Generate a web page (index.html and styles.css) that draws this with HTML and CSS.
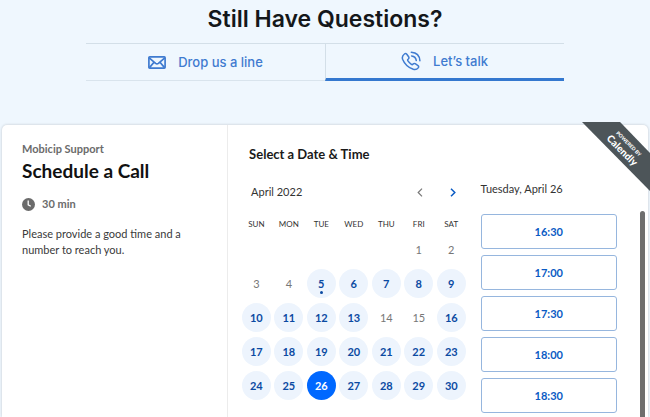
FILE: index.html
```html
<!DOCTYPE html>
<html lang="en">
<head>
    <meta charset="utf-8">
    <meta name="viewport" content="width=device-width, initial-scale=1">
    <title>Schedule a Call</title>
    <link rel="stylesheet" href="styles.css">
</head>
<body>
    <h1>Still Have Questions?</h1>

    <nav class="tabs">
        <a class="tab" href="#line">
            <svg width="18" height="13" viewBox="0 0 18 13" fill="none" stroke="currentColor" stroke-width="1.7" stroke-linejoin="round">
                <rect x="0.9" y="0.9" width="16.2" height="11.2" rx="0.8"/>
                <path d="M1.2 1.8 L7.6 7.4 Q9 8.5 10.4 7.4 L16.8 1.8 M1.5 11.6 L6 6.2 M16.5 11.6 L12 6.2"/>
            </svg>
            Drop us a line
        </a>
        <a class="tab active" href="#talk">
            <svg width="20" height="20" viewBox="0 0 20 20" fill="none" stroke="currentColor" stroke-width="1.5" stroke-linecap="round" stroke-linejoin="round">
                <path d="M3.4 3 Q4.7 1.9 5.8 3.2 L7.6 5.8 Q8.4 7 7.3 8 Q6.2 8.9 6.9 9.9 Q8.4 12 10.4 13.4 Q11.3 14 12.1 13 Q13 12 14.2 12.7 L17 14.6 Q18.2 15.5 17.2 16.9 Q15.4 19.2 12.3 18.3 Q4.6 15.6 1.6 8.2 Q0.6 5 3.4 3 Z"/>
                <path d="M10.6 4.9 Q14.8 5.4 15.3 9.6 M10.3 1.3 Q18.4 1.8 18.9 9.8"/>
            </svg>
            Let’s talk
        </a>
    </nav>

    <main class="card">
        <section class="details">
            <p class="host">Mobicip Support</p>
            <h2>Schedule a Call</h2>
            <p class="duration">
                <svg width="13" height="13" viewBox="0 0 13 13">
                    <circle cx="6.5" cy="6.5" r="6.5" fill="#6b6b6b"/>
                    <path d="M6.2 2.6 V6.8 L8.8 8.2" fill="none" stroke="#fff" stroke-width="1.3"/>
                </svg>
                30 min
            </p>
            <p class="note">Please provide a good time and a number to reach you.</p>
        </section>

        <section class="booking">
            <h3>Select a Date &amp; Time</h3>
            <div class="columns">
                <div class="calendar">
                    <div class="month">
                        <span>April 2022</span>
                        <button type="button" class="arrow" aria-label="Previous month">
                            <svg width="6" height="9" viewBox="0 0 6 9" fill="none" stroke="currentColor" stroke-width="1.2"><path d="M5 0.7 L1.2 4.5 L5 8.3"/></svg>
                        </button>
                        <button type="button" class="arrow next" aria-label="Next month">
                            <svg width="6" height="9" viewBox="0 0 6 9" fill="none" stroke="currentColor" stroke-width="1.5"><path d="M1 0.7 L4.8 4.5 L1 8.3"/></svg>
                        </button>
                    </div>
                    <table>
                        <thead>
                            <tr><th>SUN</th><th>MON</th><th>TUE</th><th>WED</th><th>THU</th><th>FRI</th><th>SAT</th></tr>
                        </thead>
                        <tbody>
                            <tr>
                                <td></td><td></td><td></td><td></td><td></td>
                                <td>1</td>
                                <td>2</td>
                            </tr>
                            <tr>
                                <td>3</td>
                                <td>4</td>
                                <td><button type="button" class="day today">5</button></td>
                                <td><button type="button" class="day">6</button></td>
                                <td><button type="button" class="day">7</button></td>
                                <td><button type="button" class="day">8</button></td>
                                <td><button type="button" class="day">9</button></td>
                            </tr>
                            <tr>
                                <td><button type="button" class="day">10</button></td>
                                <td><button type="button" class="day">11</button></td>
                                <td><button type="button" class="day">12</button></td>
                                <td><button type="button" class="day">13</button></td>
                                <td>14</td>
                                <td>15</td>
                                <td><button type="button" class="day">16</button></td>
                            </tr>
                            <tr>
                                <td><button type="button" class="day">17</button></td>
                                <td><button type="button" class="day">18</button></td>
                                <td><button type="button" class="day">19</button></td>
                                <td><button type="button" class="day">20</button></td>
                                <td><button type="button" class="day">21</button></td>
                                <td><button type="button" class="day">22</button></td>
                                <td><button type="button" class="day">23</button></td>
                            </tr>
                            <tr>
                                <td><button type="button" class="day">24</button></td>
                                <td><button type="button" class="day">25</button></td>
                                <td><button type="button" class="day selected">26</button></td>
                                <td><button type="button" class="day">27</button></td>
                                <td><button type="button" class="day">28</button></td>
                                <td><button type="button" class="day">29</button></td>
                                <td><button type="button" class="day">30</button></td>
                            </tr>
                        </tbody>
                    </table>
                </div>

                <div class="times">
                    <p class="date">Tuesday, April 26</p>
                    <button type="button" class="slot">16:30</button>
                    <button type="button" class="slot">17:00</button>
                    <button type="button" class="slot">17:30</button>
                    <button type="button" class="slot">18:00</button>
                    <button type="button" class="slot">18:30</button>
                </div>
                <div class="scrollbar"></div>
            </div>
        </section>

        <a class="ribbon" href="#calendly">
            <span><small>POWERED BY</small>Calendly</span>
        </a>
    </main>
</body>
</html>
```

FILE: styles.css
```css
* {
    box-sizing: border-box;
}

body {
    margin: 0;
    min-height: 100vh;
    display: flex;
    flex-direction: column;
    background: #eff7fe;
    color: #333;
    font-family: "Lato", "Liberation Sans", sans-serif;
    font-size: 11px;
}

h1, h2, h3, p {
    margin: 0;
}

button {
    font-family: inherit;
    padding: 0;
    border: none;
    background: none;
    cursor: pointer;
}

h1 {
    padding-top: 4px;
    font-family: "Inter", sans-serif;
    font-size: 23px;
    font-weight: 600;
    line-height: 30px;
    text-align: center;
    color: #14171a;
}

/* tabs */
.tabs {
    display: flex;
    width: 73.4%;
    margin: 9px auto 44px;
    border-top: 1px solid #d3dfe8;
}

.tab {
    flex: 1;
    display: flex;
    align-items: center;
    justify-content: center;
    gap: 12px;
    height: 37px;
    border-bottom: 1px solid #d9e4ed;
    color: #3f7bd0;
    font-family: "Inter", sans-serif;
    font-size: 13px;
    font-weight: 500;
    text-decoration: none;
}

.tab + .tab {
    border-left: 1px solid #d3dfe8;
}

.tab.active {
    border-bottom: 3px solid #3478cf;
}

/* card */
.card {
    position: relative;
    flex: 1;
    display: flex;
    margin: 0 2px;
    background: #fff;
    border-radius: 5px 5px 0 0;
    box-shadow: 0 0 3px rgba(0, 0, 0, 0.2);
}

.details {
    width: 35%;
    padding: 17px 20px;
    border-right: 1px solid #ececec;
}

.host {
    color: #6b6b6b;
    font-weight: bold;
    line-height: 14px;
}

h2 {
    margin-top: 2px;
    font-size: 19px;
    line-height: 26px;
    color: #111;
}

.duration {
    display: flex;
    align-items: center;
    gap: 7px;
    margin: 12px 0 14px;
    color: #6b6b6b;
    font-weight: bold;
    line-height: 16px;
}

.note {
    color: #3a3a3a;
    line-height: 16px;
}

.booking {
    flex: 1;
    display: flex;
    flex-direction: column;
    padding: 21px 3px 0 12px;
}

h3 {
    padding-left: 9px;
    font-size: 13px;
    line-height: 16px;
    color: #1a1a1a;
}

.columns {
    flex: 1;
    display: flex;
    margin-top: 19px;
}

.calendar {
    flex: 5;
    padding-top: 1px;
}

.month {
    display: flex;
    align-items: center;
    padding: 0 3px 0 11px;
    line-height: 20px;
}

.month span {
    flex: 1;
}

.arrow {
    display: flex;
    align-items: center;
    justify-content: center;
    width: 23px;
    height: 20px;
    margin-left: 10px;
    color: #777;
}

.arrow.next {
    color: #0a5bc4;
}

table {
    width: 100%;
    table-layout: fixed;
    border-collapse: collapse;
}

th {
    height: 30px;
    padding: 14px 0 0;
    font-size: 8px;
    font-weight: normal;
}

td {
    height: 34px;
    padding: 0;
    text-align: center;
    color: #777;
}

.day {
    position: relative;
    display: block;
    width: 29px;
    height: 29px;
    margin: 0 auto;
    border-radius: 50%;
    background: #edf4fd;
    color: #0b4aa2;
    font-size: 11px;
    font-weight: bold;
}

.day.today::after {
    content: "";
    position: absolute;
    left: 13px;
    bottom: 4px;
    width: 3px;
    height: 3px;
    border-radius: 50%;
    background: #0b4aa2;
}

.day.selected {
    background: #0068ff;
    color: #fff;
}

.times {
    flex: 3;
    display: flex;
    flex-direction: column;
    gap: 6px;
    margin-left: 13px;
}

.date {
    padding-bottom: 11px;
    line-height: 16px;
}

.slot {
    height: 35px;
    border: 1px solid #96b6de;
    border-radius: 3px;
    color: #0a5bc4;
    font-size: 11px;
    font-weight: bold;
}

.scrollbar {
    width: 5px;
    margin: 30px 0 0 23px;
    border-radius: 3px 3px 0 0;
    background: #6e6e6e;
}

/* corner ribbon */
.ribbon {
    position: absolute;
    top: -3px;
    right: -2px;
    width: 68px;
    height: 69px;
    background: #4d5559;
    clip-path: polygon(0 0, 56% 0, 100% 45%, 100% 100%);
    color: #fff;
    font-size: 10px;
    font-weight: 900;
    line-height: 10px;
    text-align: center;
    text-decoration: none;
}

.ribbon span {
    position: absolute;
    top: 17px;
    left: 13px;
    width: 60px;
    transform: rotate(45deg);
}

.ribbon small {
    display: block;
    font-size: 5px;
    line-height: 7px;
}
```
